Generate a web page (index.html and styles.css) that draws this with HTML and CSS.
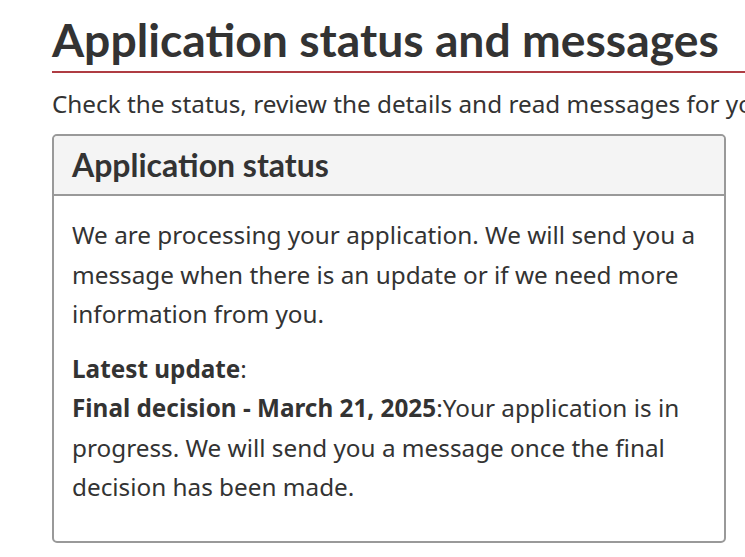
FILE: index.html
```html
<!DOCTYPE html>
<html lang="en">
<head>
<meta charset="utf-8">
<title>Application status and messages</title>
<link rel="stylesheet" href="styles.css">
</head>
<body>
<main class="page">
  <h1 class="title">Application status and messages</h1>
  <p class="intro">Check the status, review the details and read messages for your application.</p>
  <section class="panel">
    <header class="panel-head">
      <h2 class="panel-title">Application status</h2>
    </header>
    <div class="panel-body">
      <p class="para">We are processing your application. We will send you a message when there is an update or if we need more information from you.</p>
      <p class="para"><strong>Latest update</strong>:<br><strong>Final decision - March 21, 2025</strong>:Your application is in progress. We will send you a message once the final decision has been made.</p>
    </div>
  </section>
</main>
</body>
</html>
```
FILE: styles.css
```css
html, body {
  margin: 0;
  padding: 0;
  background: #fff;
  overflow: hidden;
}
body {
  font-family: "Noto Sans", sans-serif;
  color: #333;
  font-size: 24.3px;
  line-height: 39.6px;
}
.page {
  padding: 0 0 0 52px;
}
.title {
  font-family: Lato, sans-serif;
  font-weight: 700;
  font-size: 46.3px;
  line-height: 1.1;
  margin: 14px 0 0;
  padding-bottom: 6px;
  border-bottom: 2px solid #af3c43;
  white-space: nowrap;
}
.intro {
  margin: 11px 0 0;
  white-space: nowrap;
}
.panel {
  box-sizing: border-box;
  width: 674px;
  margin-top: 10px;
  border: 2px solid #999;
  border-radius: 5px;
}
.panel-head {
  background: #f4f4f4;
  border-bottom: 2px solid #999;
  border-radius: 4px 4px 0 0;
  padding: 10px 18px;
}
.panel-title {
  font-family: Lato, sans-serif;
  font-weight: 700;
  font-size: 32px;
  line-height: 1.2;
  margin: 0;
}
.panel-body {
  padding: 19px 18px 34px;
}
.para {
  margin: 0 0 15px;
}
.para:last-child {
  margin-bottom: 0;
}
strong {
  font-weight: 700;
}
```
